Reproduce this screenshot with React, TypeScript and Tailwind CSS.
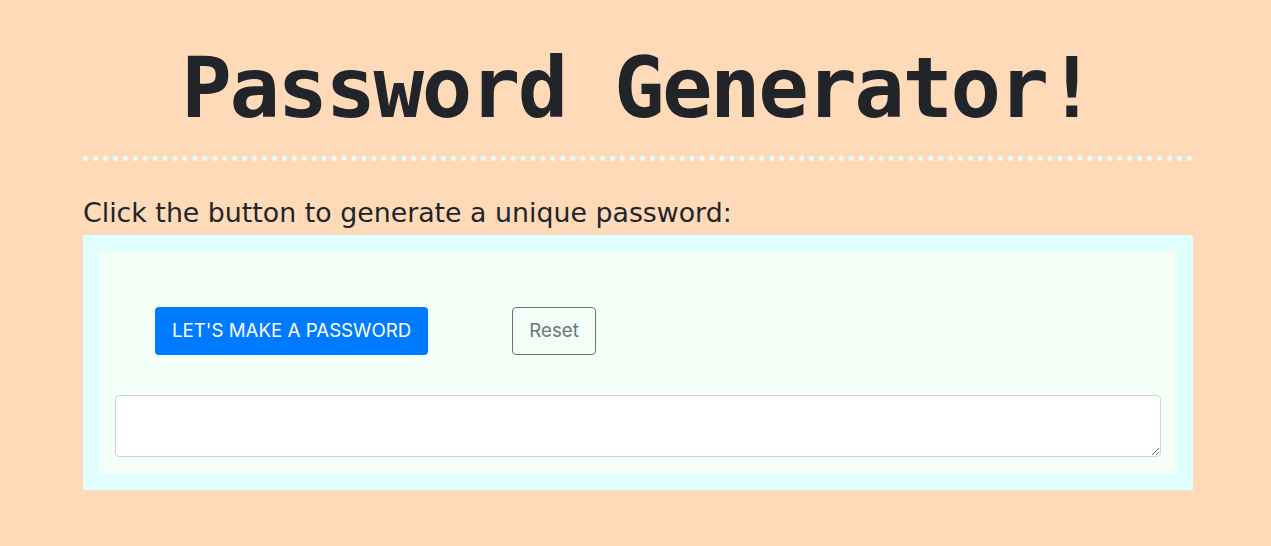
export default function App() {
  return (
    <div className="min-h-[546px] w-full bg-[#ffdab9] text-[#212529]">
      <div className="ml-[83px] w-[1110px] pt-[40px]">
        <div className="border-b-[5px] border-dotted border-[#e0ffff] pb-[20px] text-center">
          <h1 className="font-['DejaVu_Sans_Mono',monospace] text-[84px] font-bold leading-[96px] tracking-[-2.5px]">
            Password Generator!
          </h1>
        </div>
        <p className="mt-[36px] font-['DejaVu_Sans',sans-serif] text-[26.8px] leading-[32px]">
          Click the button to generate a unique password:
        </p>
        <div className="mt-[6px] bg-[#e0ffff] p-[16px]">
          <div className="bg-[#f3fff7] px-[16px] pb-[17px] pt-[56px]">
            <div className="flex items-center pl-[40px] font-['Inter',sans-serif]">
              <button className="h-[48px] rounded-[4px] bg-[#007bff] px-[17px] text-[18.7px] text-white">
                LET'S MAKE A PASSWORD
              </button>
              <button className="ml-[84px] h-[48px] rounded-[4px] border border-[#6c757d] px-[16px] text-[18.7px] text-[#6c757d]">
                Reset
              </button>
            </div>
            <textarea
              className="mt-[40px] block h-[62px] w-full rounded-[4px] border border-[#ced4da] bg-white"
              readOnly
            />
          </div>
        </div>
      </div>
    </div>
  );
}
